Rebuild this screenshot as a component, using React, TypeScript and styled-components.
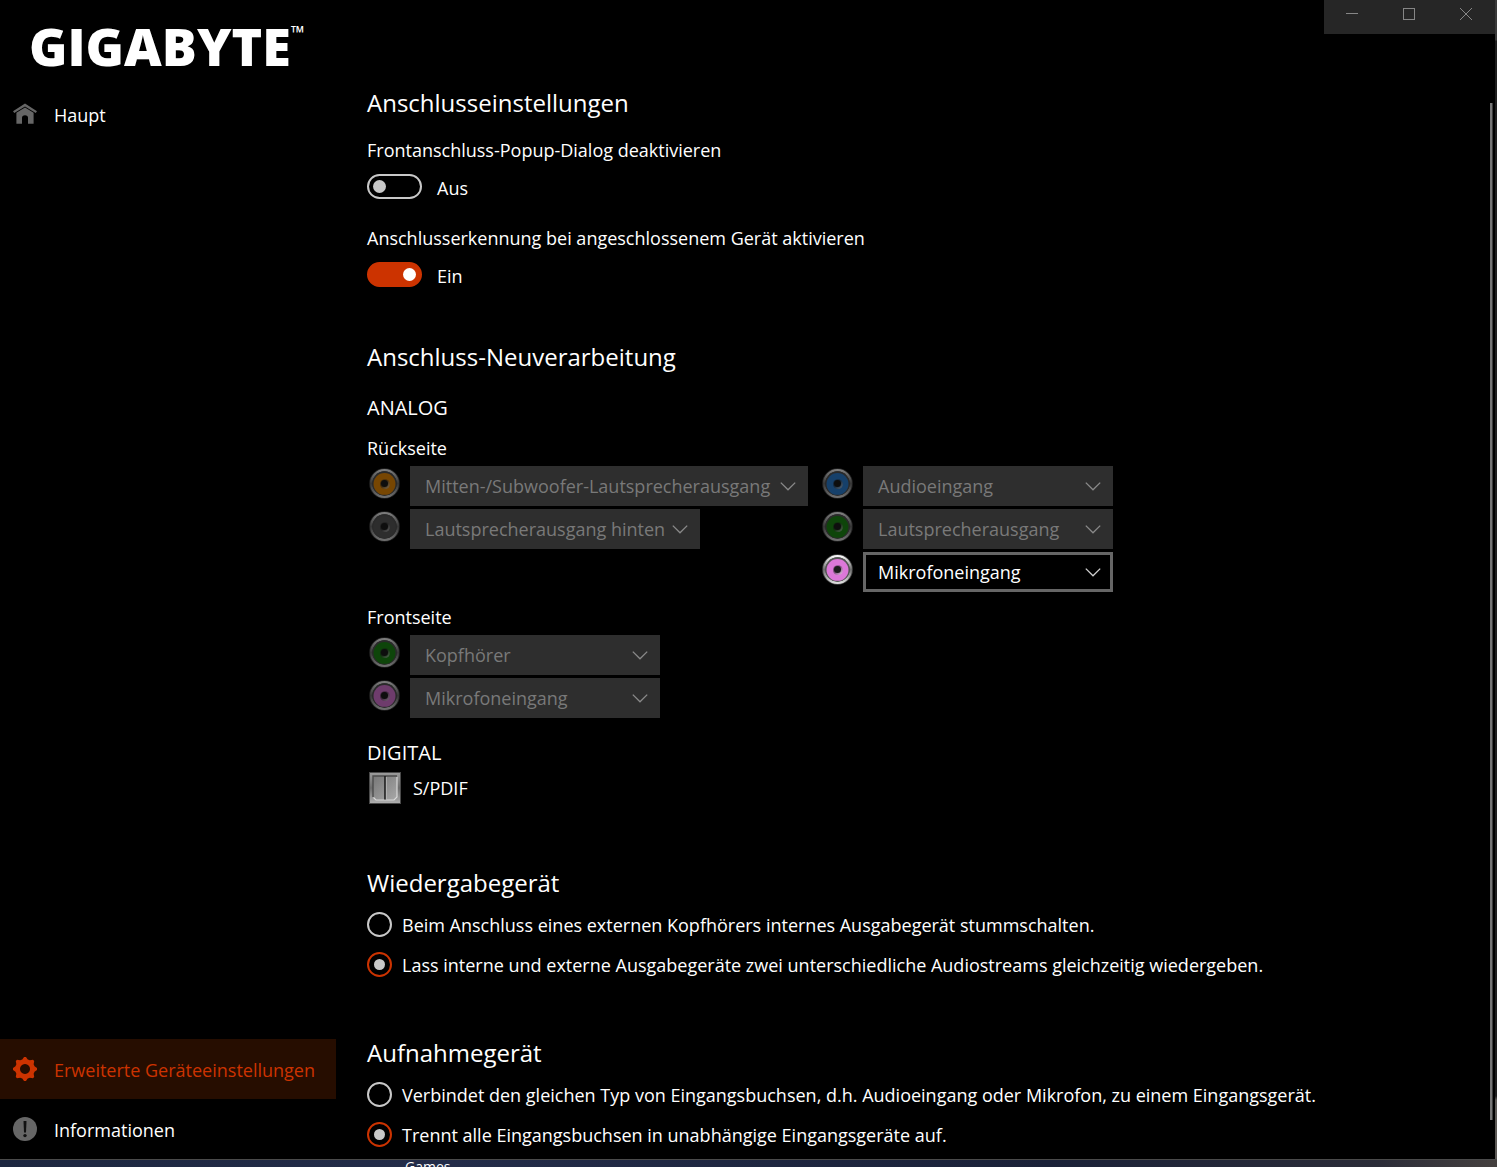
import React, { useState } from "react";
import styled, { createGlobalStyle } from "styled-components";

const accent = "#cc3300";

const GlobalStyle = createGlobalStyle`
  *, *::before, *::after { box-sizing: border-box; }
  body {
    margin: 0;
    background: #000;
    color: #fff;
    font: 18px/24px "Open Sans", "Noto Sans", sans-serif;
  }
  h2, h3, h4, p, fieldset { margin: 0; padding: 0; border: 0; min-width: 0; }
`;

const Screen = styled.div`
  display: flex;
  flex-direction: column;
  min-height: 100vh;
`;

const AppWindow = styled.div`
  flex: 1;
  display: grid;
  grid-template-columns: 336px minmax(0, 1fr) 2px;
`;

const Sidebar = styled.aside`
  display: flex;
  flex-direction: column;
`;

const Logo = styled.div`
  display: flex;
  align-items: flex-start;
  height: 84px;
  padding: 18px 0 0 29px;
  font-size: 52px;
  line-height: 56px;
  font-weight: 800;
  white-space: nowrap;
`;

const Trademark = styled.span`
  font-size: 18px;
  line-height: 28px;
  font-weight: 600;
`;

const Nav = styled.nav`
  flex: 1;
  display: flex;
  flex-direction: column;
`;

const NavSpacer = styled.div`
  flex: 1;
`;

const NavItem = styled.a<{ $active?: boolean }>`
  display: flex;
  align-items: center;
  gap: 17px;
  height: 60px;
  padding-left: 13px;
  line-height: 24px;
  color: ${(p) => (p.$active ? accent : "#fff")};
  background: ${(p) => (p.$active ? "#260d00" : "transparent")};
  text-decoration: none;
  svg { flex: none; color: ${(p) => (p.$active ? accent : "#666")}; }
  span { padding-top: 2px; }
`;

const Main = styled.main`
  display: flex;
  flex-direction: column;
`;

const WindowControls = styled.div`
  align-self: flex-end;
  display: flex;
  height: 34px;
  background: #262626;
`;

const WindowButton = styled.button`
  display: flex;
  justify-content: center;
  width: 57px;
  padding: 8px 2px 0 0;
  border: 0;
  background: none;
  color: #868686;
`;

const Body = styled.div`
  flex: 1;
  display: flex;
`;

const Content = styled.div`
  flex: 1;
  min-width: 0;
  display: flex;
  flex-direction: column;
  gap: 52px;
  padding: 53px 0 2px 31px;
`;

const ScrollThumb = styled.div`
  width: 3px;
  margin: 69px 2px 39px 0;
  background: #767676;
  border-right: 1px solid #3c3c3c;
`;

const WindowEdge = styled.div`
  background: linear-gradient(#3a3a3a 0 40px, #1e1e1e 41px 1096px, #5c5956 1100px);
`;

const Section = styled.section<{ $roomy?: boolean }>`
  padding-bottom: ${(p) => (p.$roomy ? 11 : 0)}px;
`;

const Title = styled.h2`
  font-size: 24px;
  line-height: 32px;
  font-weight: 400;
`;

const GroupTitle = styled.h3`
  margin-top: 20px;
  font-size: 20px;
  line-height: 30px;
  font-weight: 400;
`;

const PanelTitle = styled.h4`
  margin: 13px 0 6px;
  font-size: 18px;
  line-height: 24px;
  font-weight: 400;
`;

const ToggleBlock = styled.div<{ $gap: number }>`
  display: flex;
  flex-direction: column;
  gap: 12px;
  margin-top: ${(p) => p.$gap}px;
`;

const ToggleRow = styled.div`
  display: flex;
  align-items: flex-start;
  gap: 15px;
  height: 27px;
  line-height: 28px;
`;

const Switch = styled.input`
  appearance: none;
  display: flex;
  align-items: center;
  width: 55px;
  height: 25px;
  margin: 0;
  padding: 0 4px;
  border: 2px solid #c8c8c8;
  border-radius: 13px;
  &::before {
    content: "";
    width: 13px;
    height: 13px;
    border-radius: 50%;
    background: #c8c8c8;
  }
  &:checked {
    justify-content: flex-end;
    border-color: ${accent};
    background: ${accent};
  }
  &:checked::before { background: #fff; }
`;

const RearPanel = styled.div`
  display: flex;
  gap: 12px;
`;

const JackList = styled.div`
  display: flex;
  flex-direction: column;
  gap: 3px;
`;

const JackRow = styled.div`
  display: flex;
  align-items: flex-start;
  padding-left: 2px;
`;

const JackIcon = styled.svg<{ $dim: boolean }>`
  width: 31px;
  height: 31px;
  margin: 2px 10px 0 0;
  opacity: ${(p) => (p.$dim ? 0.5 : 1)};
`;

const SelectFrame = styled.div<{ $width: number }>`
  display: grid;
  align-items: center;
  width: ${(p) => p.$width}px;
  height: 40px;
  > * { grid-area: 1 / 1; }
`;

const Select = styled.select`
  appearance: none;
  width: 100%;
  height: 40px;
  padding: 0 30px 0 12px;
  border: 3px solid #666;
  border-radius: 0;
  background: #000;
  color: #fff;
  font: inherit;
  opacity: 1;
  &:disabled {
    border-color: #2e2e2e;
    background: #2e2e2e;
    color: #797979;
  }
`;

const Chevron = styled.svg<{ $dim: boolean }>`
  justify-self: end;
  width: 16px;
  height: 10px;
  margin-right: 12px;
  pointer-events: none;
  color: ${(p) => (p.$dim ? "#8a8a8a" : "#d0d0d0")};
`;

const DigitalRow = styled.div`
  display: flex;
  align-items: center;
  gap: 12px;
  height: 32px;
  margin-top: 4px;
  padding-left: 2px;
`;

const RadioGroup = styled.fieldset`
  margin-top: 6px;
`;

const RadioRow = styled.label`
  display: flex;
  align-items: center;
  gap: 10px;
  height: 40px;
`;

const Radio = styled.input`
  appearance: none;
  flex: none;
  display: grid;
  place-items: center;
  width: 25px;
  height: 25px;
  margin: 0 0 2px;
  border: 2px solid #c8c8c8;
  border-radius: 50%;
  &:checked { border-color: ${accent}; }
  &:checked::before {
    content: "";
    width: 11px;
    height: 11px;
    border-radius: 50%;
    background: #c8c8c8;
  }
`;

const Desktop = styled.div`
  height: 8px;
  padding-left: 405px;
  overflow: hidden;
  border-top: 1px solid #4a4a4a;
  background: linear-gradient(90deg, #1d2740, #232c49 30%, #1a2138 70%, #2b2c38 92%, #45403f);
  font-size: 14px;
  line-height: 14px;
`;

const HomeIcon = () => (
  <svg width="24" height="24" viewBox="0 0 24 24" aria-hidden="true">
    <path d="M12 1.6 L0 9.2 L1.3 10.9 L12 4.4 L22.7 10.9 L24 9.2 Z" fill="currentColor" />
    <path d="M12 5.6 L3.4 10.8 V21.8 H9 V15.8 Q9 13.2 12 13.2 Q15 13.2 15 15.8 V21.8 H20.6 V10.8 Z" fill="currentColor" />
  </svg>
);

const gearPoints = Array.from({ length: 32 }, (_, i) => {
  const tooth = Math.floor(i / 4);
  const step = i % 4;
  const angle = ((tooth * 45 + [-16, -4, 4, 16][step] - 90) * Math.PI) / 180;
  const radius = step === 0 || step === 3 ? 9.9 : 12.2;
  return `${(12 + radius * Math.cos(angle)).toFixed(2)} ${(12 + radius * Math.sin(angle)).toFixed(2)}`;
});

const GearIcon = () => (
  <svg width="24" height="24" viewBox="0 0 24 24" aria-hidden="true">
    <path
      fillRule="evenodd"
      fill="currentColor"
      d={`M${gearPoints.join(" L")} Z M12 7 a5 5 0 1 0 0.01 0 Z`}
    />
  </svg>
);

const InfoIcon = () => (
  <svg width="24" height="24" viewBox="0 0 24 24" aria-hidden="true">
    <circle cx="12" cy="12" r="12" fill="currentColor" />
    <path d="M10.5 4 H13.5 L13 15.4 H11 Z" fill="#111" />
    <circle cx="12" cy="18.6" r="1.7" fill="#111" />
  </svg>
);

const Jack = ({ color, dim, id }: { color: string; dim: boolean; id: string }) => (
  <JackIcon $dim={dim} viewBox="0 0 30 30" aria-hidden="true">
    <defs>
      <linearGradient id={`${id}-ring`} x1="0" y1="0" x2="0" y2="1">
        <stop offset="0" stopColor="#f8f8f8" />
        <stop offset="0.5" stopColor="#6c6c6c" />
        <stop offset="1" stopColor="#dcdcdc" />
      </linearGradient>
      <linearGradient id={`${id}-hole`} x1="0" y1="0" x2="1" y2="1">
        <stop offset="0.4" stopColor="#222" stopOpacity="0.5" />
        <stop offset="1" stopColor="#fff" stopOpacity="0.7" />
      </linearGradient>
    </defs>
    <circle cx="15" cy="15" r="14.8" fill="#444" />
    <circle cx="15" cy="15" r="12.9" fill="none" stroke={`url(#${id}-ring)`} strokeWidth="2.2" />
    <circle cx="15" cy="15" r="11.8" fill="#555" />
    <circle cx="15" cy="15.4" r="10.6" fill={color} />
    <circle cx="15.4" cy="15.6" r="4.8" fill={`url(#${id}-hole)`} />
    <circle cx="15" cy="15" r="3.4" fill="#1c1c1c" />
  </JackIcon>
);

const SpdifIcon = () => (
  <svg width="32" height="32" viewBox="0 0 32 32" aria-hidden="true">
    <defs>
      <linearGradient id="spdif-frame" x1="0" y1="0" x2="0" y2="1">
        <stop offset="0" stopColor="#9c9c9c" />
        <stop offset="0.5" stopColor="#6c6c6c" />
        <stop offset="1" stopColor="#b0b0b0" />
      </linearGradient>
      <linearGradient id="spdif-door" x1="0" y1="0" x2="1" y2="1">
        <stop offset="0" stopColor="#777" />
        <stop offset="1" stopColor="#a8a8a8" />
      </linearGradient>
    </defs>
    <rect x="0.5" y="0.5" width="31" height="31" fill="url(#spdif-frame)" stroke="#4a4a4a" />
    <path d="M4 4 H28 V25 L25 28 H7 L4 25 Z" fill="url(#spdif-door)" />
    <path d="M4 25 V4 H28" fill="none" stroke="#4c4c4c" strokeWidth="1.4" />
    <path d="M28 5 V25 L25 28 H7 L4.5 25.5" fill="none" stroke="#d8d8d8" strokeWidth="1.2" />
    <path d="M16 4 V27.5" stroke="#1c1c1c" strokeWidth="1.6" />
    <path d="M17.4 5 V27" stroke="#bbb" strokeWidth="0.8" />
  </svg>
);

type Port = { id: string; color: string; label: string; width: number; active?: boolean };

const rearLeft: Port[] = [
  { id: "rear-center", color: "#ee8c04", label: "Mitten-/Subwoofer-Lautsprecherausgang", width: 398 },
  { id: "rear-back", color: "#5a5a5a", label: "Lautsprecherausgang hinten", width: 290 },
];
const rearRight: Port[] = [
  { id: "rear-line", color: "#2c80d4", label: "Audioeingang", width: 250 },
  { id: "rear-speaker", color: "#1c8a14", label: "Lautsprecherausgang", width: 250 },
  { id: "rear-mic", color: "#dc78d8", label: "Mikrofoneingang", width: 250, active: true },
];
const front: Port[] = [
  { id: "front-headphone", color: "#1c8a14", label: "Kopfhörer", width: 250 },
  { id: "front-mic", color: "#dc78d8", label: "Mikrofoneingang", width: 250 },
];

const Ports = ({ ports }: { ports: Port[] }) => (
  <JackList>
    {ports.map((port) => (
      <JackRow key={port.id}>
        <Jack id={port.id} color={port.color} dim={!port.active} />
        <SelectFrame $width={port.width}>
          <Select aria-label={port.label} disabled={!port.active}>
            <option>{port.label}</option>
          </Select>
          <Chevron $dim={!port.active} viewBox="0 0 16 10" aria-hidden="true">
            <path d="M0.8 1.6 L8 8.8 L15.2 1.6" fill="none" stroke="currentColor" strokeWidth="1.3" />
          </Chevron>
        </SelectFrame>
      </JackRow>
    ))}
  </JackList>
);

const Toggle = ({ id, label, initial, gap }: { id: string; label: string; initial: boolean; gap: number }) => {
  const [on, setOn] = useState(initial);
  return (
    <ToggleBlock $gap={gap}>
      <label htmlFor={id}>{label}</label>
      <ToggleRow>
        <Switch id={id} type="checkbox" role="switch" checked={on} onChange={() => setOn(!on)} />
        <span>{on ? "Ein" : "Aus"}</span>
      </ToggleRow>
    </ToggleBlock>
  );
};

const Choices = ({ name, options }: { name: string; options: string[] }) => {
  const [selected, setSelected] = useState(1);
  return (
    <RadioGroup aria-label={name}>
      {options.map((option, i) => (
        <RadioRow key={option}>
          <Radio type="radio" name={name} checked={selected === i} onChange={() => setSelected(i)} />
          <span>{option}</span>
        </RadioRow>
      ))}
    </RadioGroup>
  );
};

export default function App() {
  return (
    <Screen>
      <GlobalStyle />
      <AppWindow>
        <Sidebar>
          <Logo>
            GIGABYTE<Trademark>™</Trademark>
          </Logo>
          <Nav>
            <NavItem href="#main"><HomeIcon /><span>Haupt</span></NavItem>
            <NavSpacer />
            <NavItem href="#advanced" $active aria-current="page"><GearIcon /><span>Erweiterte Geräteeinstellungen</span></NavItem>
            <NavItem href="#info"><InfoIcon /><span>Informationen</span></NavItem>
          </Nav>
        </Sidebar>
        <Main>
          <WindowControls>
            <WindowButton aria-label="Minimieren">
              <svg width="12" height="12" viewBox="0 0 12 12"><path d="M0 5.5 H12" stroke="currentColor" /></svg>
            </WindowButton>
            <WindowButton aria-label="Maximieren">
              <svg width="12" height="12" viewBox="0 0 12 12"><rect x="0.5" y="0.5" width="11" height="11" fill="none" stroke="currentColor" /></svg>
            </WindowButton>
            <WindowButton aria-label="Schließen">
              <svg width="12" height="12" viewBox="0 0 12 12"><path d="M0 0 L12 12 M12 0 L0 12" stroke="currentColor" /></svg>
            </WindowButton>
          </WindowControls>
          <Body>
            <Content>
              <Section>
                <Title>Anschlusseinstellungen</Title>
                <Toggle id="popup" gap={19} label="Frontanschluss-Popup-Dialog deaktivieren" initial={false} />
                <Toggle id="detect" gap={25} label="Anschlusserkennung bei angeschlossenem Gerät aktivieren" initial />
              </Section>
              <Section $roomy>
                <Title>Anschluss-Neuverarbeitung</Title>
                <GroupTitle>ANALOG</GroupTitle>
                <PanelTitle>Rückseite</PanelTitle>
                <RearPanel>
                  <Ports ports={rearLeft} />
                  <Ports ports={rearRight} />
                </RearPanel>
                <PanelTitle>Frontseite</PanelTitle>
                <Ports ports={front} />
                <GroupTitle>DIGITAL</GroupTitle>
                <DigitalRow><SpdifIcon />S/PDIF</DigitalRow>
              </Section>
              <Section>
                <Title>Wiedergabegerät</Title>
                <Choices
                  name="Wiedergabegerät"
                  options={[
                    "Beim Anschluss eines externen Kopfhörers internes Ausgabegerät stummschalten.",
                    "Lass interne und externe Ausgabegeräte zwei unterschiedliche Audiostreams gleichzeitig wiedergeben.",
                  ]}
                />
              </Section>
              <Section>
                <Title>Aufnahmegerät</Title>
                <Choices
                  name="Aufnahmegerät"
                  options={[
                    "Verbindet den gleichen Typ von Eingangsbuchsen, d.h. Audioeingang oder Mikrofon, zu einem Eingangsgerät.",
                    "Trennt alle Eingangsbuchsen in unabhängige Eingangsgeräte auf.",
                  ]}
                />
              </Section>
            </Content>
            <ScrollThumb />
          </Body>
        </Main>
        <WindowEdge />
      </AppWindow>
      <Desktop>Games</Desktop>
    </Screen>
  );
}
